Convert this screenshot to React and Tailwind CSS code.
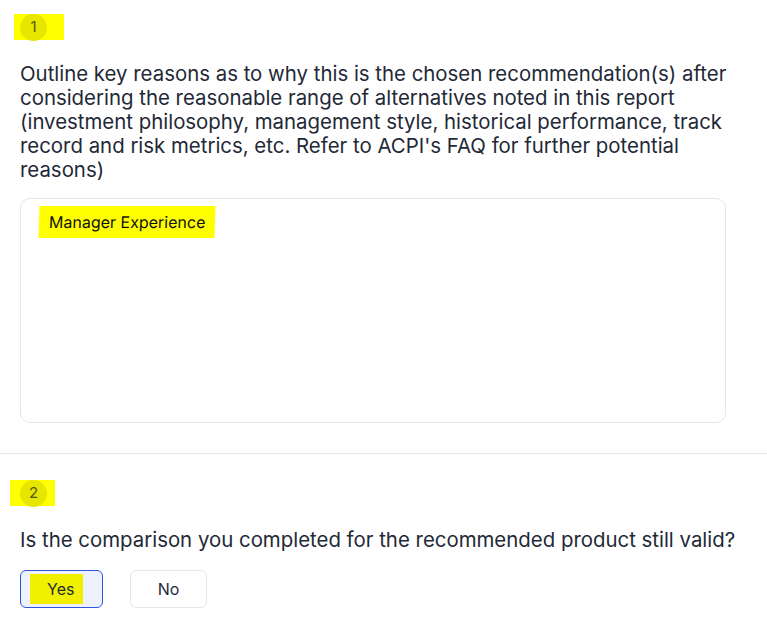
import React from "react";

function Badge({ n, className }) {
  return (
    <div className={className}>
      <div className="flex h-[27px] w-[27px] items-center justify-center rounded-full bg-[#e6e600] text-[15px] text-[#55550a]">
        {n}
      </div>
    </div>
  );
}

export default function App() {
  return (
    <div className="min-h-screen bg-white font-['Inter',sans-serif] text-[#1f2937]">
      <section className="px-5 pt-[14px] pb-[30px]">
        <Badge n="1" className="-ml-[6px] flex h-[26px] w-[50px] items-center bg-[#ffff00] pl-[6px]" />
        <p className="mt-[22px] text-[20.4px] leading-6">
          Outline key reasons as to why this is the chosen recommendation(s) after considering the
          reasonable range of alternatives noted in this report (investment philosophy, management
          style, historical performance, track record and risk metrics, etc. Refer to ACPI's FAQ for
          further potential reasons)
        </p>
        <div className="mt-[16px] h-[225px] w-[706px] rounded-[10px] border border-[#e5e7eb] px-[18px] pt-[7px]">
          <span className="inline-block -skew-x-2 bg-[#ffff00] px-[10px] py-[4px] text-[16px] text-[#111]">
            Manager Experience
          </span>
        </div>
      </section>
      <div className="border-t border-[#e5e7eb]" />
      <section className="px-5 pt-[26px]">
        <Badge n="2" className="-ml-[10px] flex h-[26px] w-[45px] items-center bg-[#ffff00] pl-[10px]" />
        <p className="mt-[22px] text-[20.4px] leading-6">
          Is the comparison you completed for the recommended product still valid?
        </p>
        <div className="mt-[18px] flex gap-[27px]">
          <button className="flex h-[38px] w-[83px] items-center rounded-[6px] border border-[#2f55e0] bg-[#eef2ff] pl-[9px] text-[16px]">
            <span className="bg-[#f0f000] pl-[17px] pr-[9px] py-[3px]">Yes</span>
          </button>
          <button className="flex h-[38px] w-[77px] items-center justify-center rounded-[6px] border border-[#e5e7eb] bg-white text-[16px]">
            No
          </button>
        </div>
      </section>
    </div>
  );
}
